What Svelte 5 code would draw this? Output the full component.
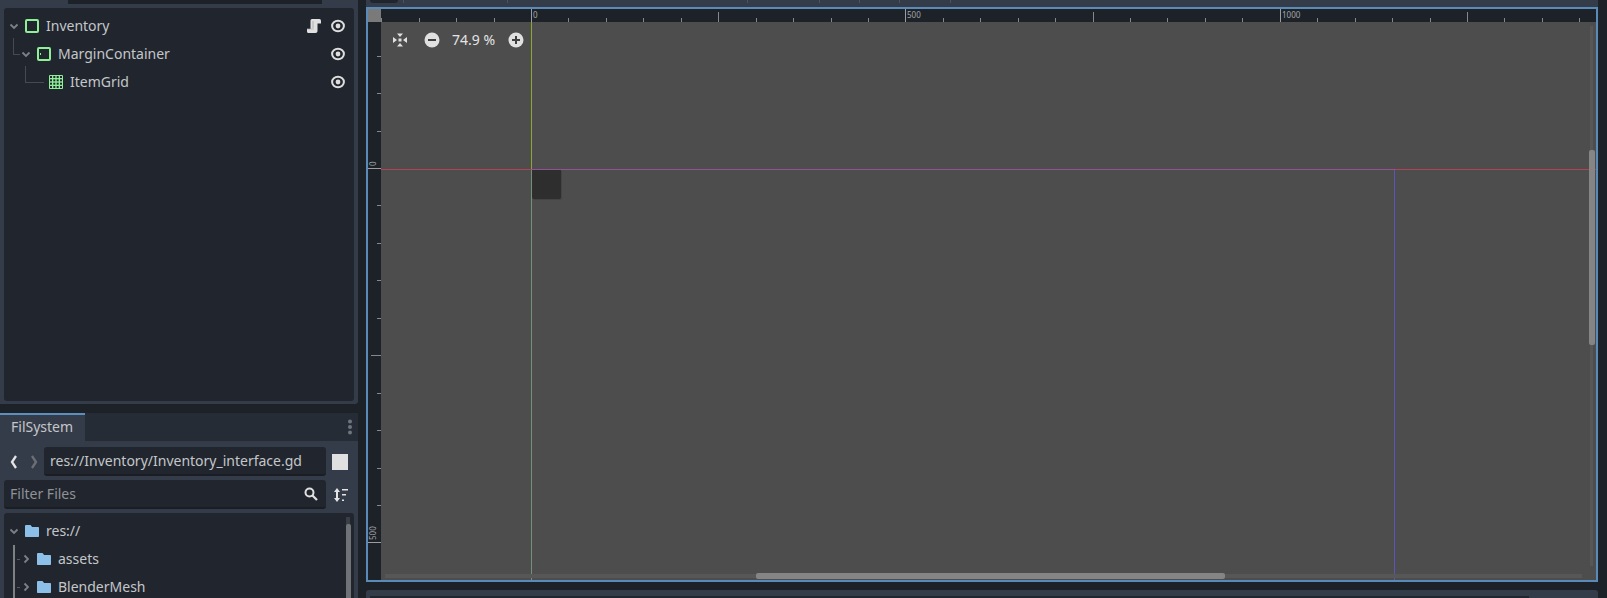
<script>
  const step = 37.44;
  const hTicks = [];
  for (let i = -4; i <= 28; i++) {
    const x = Math.round(150 + i * step);
    const n = ((i % 10) + 10) % 10;
    hTicks.push({ x, h: n === 0 ? 13 : n === 5 ? 10 : 4, major: n === 0, label: n === 0 ? String(i * 50) : '' });
  }
  const vTicks = [];
  for (let i = -4; i <= 11; i++) {
    const y = Math.round(146 + i * step);
    const n = ((i % 10) + 10) % 10;
    vTicks.push({ y, w: n === 0 ? 13 : n === 5 ? 10 : 4, major: n === 0, label: n === 0 ? String(i * 50) : '' });
  }
  const seps = [403, 507, 747, 819, 859, 899, 950];
  const holes = [1, 4.33, 7.67, 11];
</script>

{#snippet eyeIcon()}
  <svg class="eye" width="16" height="16" viewBox="0 0 16 16">
    <ellipse cx="8" cy="8" rx="5.9" ry="5.2" fill="none" stroke="#dedede" stroke-width="2" />
    <circle cx="8" cy="8" r="2.4" fill="#dedede" />
  </svg>
{/snippet}

{#snippet chevDown()}
  <svg class="chev" width="12" height="12" viewBox="0 0 12 12">
    <path d="M2.5 4.5 6 8l3.5-3.5" fill="none" stroke="#7d8087" stroke-width="1.8" />
  </svg>
{/snippet}

{#snippet chevRight()}
  <svg class="chev" width="12" height="12" viewBox="0 0 12 12">
    <path d="M4.5 2.5 8 6l-3.5 3.5" fill="none" stroke="#7d8087" stroke-width="1.8" />
  </svg>
{/snippet}

{#snippet folder()}
  <svg class="nodeicon" width="14" height="12" viewBox="0 0 14 12">
    <path d="M0 1.2C0 .5.5 0 1.2 0H5.5l1.6 2H13c.6 0 1 .4 1 1v8c0 .6-.4 1-1 1H1c-.6 0-1-.4-1-1z" fill="#8dc0e8" />
  </svg>
{/snippet}

<div class="root">
  <div class="left">
    <section class="scene">
      <div class="stub"></div>
      <div class="tree">
        <div class="row">
          {@render chevDown()}
          <svg class="nodeicon" width="14" height="14" viewBox="0 0 14 14">
            <rect x="1" y="1" width="12" height="12" rx="1" fill="none" stroke="#8eef97" stroke-width="2" />
          </svg>
          <span class="label">Inventory</span>
          <svg class="script" width="16" height="16" viewBox="0 0 16 16">
            <path d="M6 1h7.500C14.400 1 15 1.800 15 3v2.500h-3.500V13c0 1.200-.8 2-2 2H2.500C1.500 15 1 14.200 1 13.200V11h3.500V3C4.500 1.800 5 1 6 1z" fill="#e0e0e0" />
            <path d="M7 3v7" stroke="#b0b0b0" stroke-width="1" />
            <path d="M1 11h7" stroke="#b0b0b0" stroke-width=".7" />
          </svg>
          {@render eyeIcon()}
        </div>
        <div class="row lv1">
          <span class="elbow e1"></span>
          {@render chevDown()}
          <svg class="nodeicon" width="14" height="14" viewBox="0 0 14 14">
            <rect x="1" y="1" width="12" height="12" rx="1" fill="none" stroke="#8eef97" stroke-width="2" />
            <rect x="3" y="6" width="1" height="2" fill="#8eef97" />
          </svg>
          <span class="label">MarginContainer</span>
          {@render eyeIcon()}
        </div>
        <div class="row lv2">
          <span class="elbow e2"></span>
          <svg class="nodeicon" width="14" height="14" viewBox="0 0 14 14">
            <rect width="14" height="14" rx="1" fill="#8eef97" />
            {#each holes as hx}
              {#each holes as hy}
                <rect x={hx} y={hy} width="2" height="2" fill="#21262e" />
              {/each}
            {/each}
          </svg>
          <span class="label">ItemGrid</span>
          {@render eyeIcon()}
        </div>
      </div>
    </section>

    <section class="fs">
      <div class="tabbar">
        <div class="tab">FilSystem</div>
        <svg class="kebab" width="4" height="16" viewBox="0 0 4 16">
          <circle cx="2" cy="2.500" r="2" fill="#70757d" />
          <circle cx="2" cy="8" r="2" fill="#70757d" />
          <circle cx="2" cy="13.500" r="2" fill="#70757d" />
        </svg>
      </div>
      <div class="fsbody">
        <div class="pathrow">
          <svg class="nav back" width="12" height="14" viewBox="0 0 12 14">
            <path d="M8 1 4 7l4 6" fill="none" stroke="#e4e4e4" stroke-width="2.300" />
          </svg>
          <svg class="nav fwd" width="12" height="14" viewBox="0 0 12 14">
            <path d="M4 1l4 6-4 6" fill="none" stroke="#6b6f76" stroke-width="2.300" />
          </svg>
          <div class="field path">res://Inventory/Inventory_interface.gd</div>
          <div class="square"></div>
        </div>
        <div class="filterrow">
          <div class="field filter">
            <span>Filter Files</span>
            <svg width="14" height="14" viewBox="0 0 14 14">
              <circle cx="5.500" cy="5.500" r="4" fill="none" stroke="#e0e0e0" stroke-width="2" />
              <path d="m8.500 8.500 4.500 4.500" stroke="#e0e0e0" stroke-width="2.200" />
            </svg>
          </div>
          <svg class="sort" width="16" height="16" viewBox="0 0 16 16">
            <path d="M4 3v10" stroke="#e4e4e4" stroke-width="2" />
            <path d="M1 5l3-4 3 4zM1 11l3 4 3-4z" fill="#e4e4e4" />
            <path d="M9 2h6v1.500H9zM9 7h4v1.500H9zM9 12.500h2V14H9z" fill="#e4e4e4" />
          </svg>
        </div>
        <div class="tree files">
          <div class="row">
            {@render chevDown()}
            {@render folder()}
            <span class="label">res://</span>
          </div>
          <div class="row lv1">
            <span class="dash"></span>
            {@render chevRight()}
            {@render folder()}
            <span class="label">assets</span>
          </div>
          <div class="row lv1">
            <span class="dash"></span>
            {@render chevRight()}
            {@render folder()}
            <span class="label">BlenderMesh</span>
          </div>
          <span class="guide"></span>
          <span class="fscroll"><span class="fgrab"></span></span>
        </div>
      </div>
    </section>
  </div>

  <div class="right">
    <div class="topstrip">
      <span class="tabstub"></span>
      {#each seps as s}
        <span class="sep" style="left: {s - 366}px"></span>
      {/each}
    </div>
    <div class="viewport">
      <div class="corner"></div>
      <svg class="hruler" width="1215" height="13" shape-rendering="crispEdges">
        {#each hTicks as t}
          <rect x={t.x} y={13 - t.h} width="1" height={t.h} fill={t.major ? '#9b9da0' : '#85888c'} />
          {#if t.label}<text class="rtext" x={t.x + 2} y="9">{t.label}</text>{/if}
        {/each}
      </svg>
      <svg class="vruler" width="13" height="558" shape-rendering="crispEdges">
        {#each vTicks as t}
          <rect x={13 - t.w} y={t.y} width={t.w} height="1" fill={t.major ? '#9b9da0' : '#85888c'} />
          {#if t.label}<text class="rtext" transform="translate(8 {t.y - 2}) rotate(-90)">{t.label}</text>{/if}
        {/each}
      </svg>
      <div class="canvas">
        <div class="box"></div>
        <svg class="lines" width="1215" height="558" shape-rendering="crispEdges">
          <rect x="150" y="0" width="1" height="147" fill="#8ca82a" />
          <rect x="150" y="148" width="1" height="410" fill="#75907a" />
          <rect x="1013" y="148" width="1" height="410" fill="#5a55b8" />
          <rect x="0" y="147" width="150" height="1" fill="#b4405a" />
          <rect x="150" y="147" width="864" height="1" fill="#96509a" />
          <rect x="1014" y="147" width="201" height="1" fill="#b4405a" />
        </svg>
        <div class="zoombar">
          <svg width="16" height="16" viewBox="0 0 16 16">
            <rect x="6.500" y="6.500" width="3" height="3" fill="#e0e0e0" />
            <path d="M5 1.500h6L8 5zM5 14.500h6L8 11zM1 5v6l4-3zM15 5v6l-4-3z" fill="#e0e0e0" />
          </svg>
          <svg class="zbtn minus" width="16" height="16" viewBox="0 0 16 16">
            <circle cx="8" cy="8" r="7.500" fill="#e0e0e0" />
            <rect x="4" y="7" width="8" height="2" fill="#3f3f3f" />
          </svg>
          <span class="pct">74.9 %</span>
          <svg class="zbtn plus" width="16" height="16" viewBox="0 0 16 16">
            <circle cx="8" cy="8" r="7.500" fill="#e0e0e0" />
            <path d="M4 7h3V4h2v3h3v2H9v3H7V9H4z" fill="#3f3f3f" />
          </svg>
        </div>
        <div class="vtrack"><span class="vgrab"></span></div>
        <div class="htrack"><span class="hgrab"></span></div>
      </div>
    </div>
    <div class="bottomstrip"><span class="bottomdark"></span></div>
  </div>
</div>

<style>
  :global(body) {
    margin: 0;
    background: #1d2229;
    overflow: hidden;
  }
  .root {
    display: grid;
    grid-template-columns: 358px 1232px;
    column-gap: 8px;
    width: 1607px;
    height: 598px;
    overflow: hidden;
    background: #1d2229;
    font-family: "Noto Sans", sans-serif;
    font-size: 14px;
    color: #c4c6ca;
  }
  .left {
    display: flex;
    flex-direction: column;
    gap: 9px;
    height: 598px;
  }
  .scene {
    position: relative;
    box-sizing: border-box;
    height: 404px;
    padding: 8px 4px 3px;
    background: #353c49;
    border-radius: 0 0 3px 0;
    display: flex;
  }
  .stub {
    position: absolute;
    left: 68px;
    top: 0;
    width: 254px;
    height: 4px;
    background: #1d2229;
  }
  .tree {
    position: relative;
    flex: 1;
    box-sizing: border-box;
    padding: 4px 0 0;
    background: #21262e;
    border-radius: 3px;
  }
  .row {
    position: relative;
    display: flex;
    align-items: center;
    height: 28px;
    padding-left: 4px;
  }
  .row.lv1 { padding-left: 16px; }
  .row.lv2 { padding-left: 45px; }
  .chev { flex: none; margin-right: 5px; }
  .nodeicon { flex: none; margin-right: 7px; }
  .label { flex: 1; line-height: 28px; white-space: nowrap; }
  .script { flex: none; margin-right: 8px; }
  .eye { flex: none; margin-right: 8px; }
  .elbow {
    position: absolute;
    border-left: 1px solid #454b56;
    border-bottom: 1px solid #454b56;
  }
  .elbow.e1 { left: 9px; top: -2px; width: 6px; height: 16px; }
  .elbow.e2 { left: 21px; top: -2px; width: 18px; height: 16px; }

  .fs {
    flex: 1;
    min-height: 0;
    display: flex;
    flex-direction: column;
    background: #353c49;
    border-radius: 3px 3px 0 0;
  }
  .tabbar {
    display: flex;
    align-items: center;
    justify-content: space-between;
    height: 28px;
    flex: none;
    background: #262c36;
    padding-right: 6px;
  }
  .tab {
    box-sizing: border-box;
    width: 85px;
    height: 28px;
    padding: 0 0 0 11px;
    line-height: 24px;
    background: #353c49;
    border-top: 2px solid #5c8fc0;
  }
  .fsbody {
    flex: 1;
    min-height: 0;
    display: flex;
    flex-direction: column;
    padding: 6px 4px 0;
    gap: 4px;
  }
  .pathrow, .filterrow {
    display: flex;
    align-items: center;
    flex: none;
  }
  .nav { flex: none; }
  .nav.back { margin: 0 8px 0 4px; }
  .nav.fwd { margin-right: 4px; }
  .field {
    box-sizing: border-box;
    height: 29px;
    background: #21262e;
    border-bottom: 2px solid #1a1e24;
    border-radius: 3px;
    line-height: 27px;
    padding-left: 6px;
  }
  .path { width: 282px; }
  .square {
    width: 16px;
    height: 16px;
    margin-left: 6px;
    background: #e0e0e0;
  }
  .filter {
    width: 322px;
    display: flex;
    align-items: center;
    justify-content: space-between;
    padding-right: 8px;
    color: #8f9297;
  }
  .sort { flex: none; margin-left: 7px; }
  .files {
    flex: 1;
    padding-top: 4px;
    border-radius: 3px 3px 0 0;
    overflow: hidden;
  }
  .dash {
    position: absolute;
    left: 13px;
    top: 14px;
    width: 3px;
    height: 1px;
    background: #555a64;
  }
  .guide {
    position: absolute;
    left: 9px;
    top: 32px;
    bottom: 0;
    width: 2px;
    background: #7d8186;
  }
  .fscroll {
    position: absolute;
    right: 4px;
    top: 4px;
    bottom: 0;
    width: 4px;
    background: #3a3f47;
  }
  .fgrab {
    position: absolute;
    inset: 7px -0.5px 0;
    background: #6f7277;
    border-radius: 2px 2px 0 0;
  }

  .right {
    display: flex;
    flex-direction: column;
    height: 598px;
  }
  .topstrip {
    position: relative;
    height: 7px;
    flex: none;
    background: #353c49;
  }
  .tabstub {
    position: absolute;
    left: 4px;
    top: 0;
    width: 28px;
    height: 3px;
    background: #21262e;
    border-radius: 0 0 3px 3px;
  }
  .sep {
    position: absolute;
    top: 0;
    width: 1px;
    height: 3px;
    background: #4b525e;
  }
  .viewport {
    box-sizing: border-box;
    flex: none;
    height: 575px;
    border: 2px solid #5a8bb8;
    display: grid;
    grid-template-columns: 13px 1215px;
    grid-template-rows: 13px 558px;
    background: #1d2229;
  }
  .corner { background: #7a7a7a; }
  .hruler, .vruler { display: block; background: #1d2229; }
  .rtext {
    font-family: "Noto Sans", sans-serif;
    font-size: 8px;
    fill: #a3a5a8;
  }
  .canvas {
    position: relative;
    background: #4d4d4d;
    overflow: hidden;
  }
  .box {
    position: absolute;
    left: 151px;
    top: 148px;
    width: 29px;
    height: 29px;
    background: #2e2e2e;
    border-radius: 0 0 2px 2px;
    box-shadow: 1px 1px 0 #444;
  }
  .lines { position: absolute; inset: 0; }
  .zoombar {
    position: absolute;
    left: 11px;
    top: 10px;
    height: 16px;
    display: flex;
    align-items: center;
  }
  .zbtn.minus { margin-left: 16px; }
  .pct {
    width: 68px;
    padding-right: 1px;
    box-sizing: border-box;
    text-align: center;
    font-size: 14px;
    color: #e4e4e4;
    line-height: 16px;
  }
  .vtrack {
    position: absolute;
    right: 3px;
    top: 4px;
    height: 540px;
    width: 3px;
    background: #575757;
  }
  .vgrab {
    position: absolute;
    left: -1px;
    top: 124px;
    width: 6px;
    height: 195px;
    background: #858585;
    border-radius: 2px;
  }
  .htrack {
    position: absolute;
    left: 4px;
    bottom: 2px;
    width: 1197px;
    height: 4px;
    background: #575757;
  }
  .hgrab {
    position: absolute;
    left: 371px;
    top: -1px;
    width: 469px;
    height: 6px;
    background: #858585;
    border-radius: 2px;
  }
  .bottomstrip {
    position: relative;
    margin-top: 8px;
    flex: 1;
    background: #353c49;
    border-radius: 3px 3px 0 0;
  }
  .bottomdark {
    position: absolute;
    left: 4px;
    bottom: 0;
    width: 1159px;
    height: 2px;
    background: #21262e;
  }
</style>
